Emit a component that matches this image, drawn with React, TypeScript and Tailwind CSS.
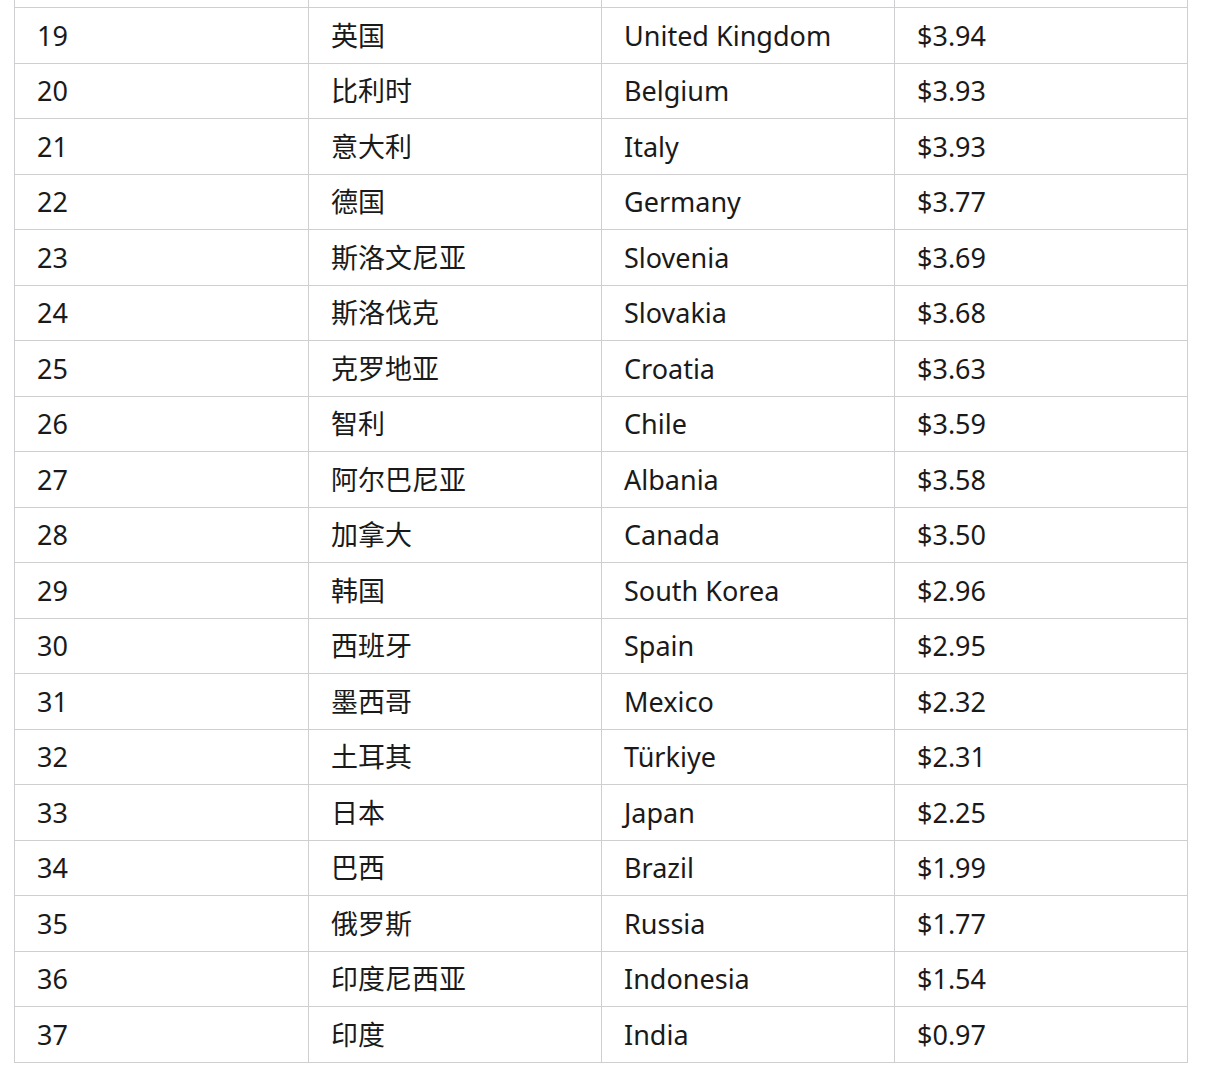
const ROWS: [number, string, string, string][] = [
  [19, '英国', 'United Kingdom', '$3.94'],
  [20, '比利时', 'Belgium', '$3.93'],
  [21, '意大利', 'Italy', '$3.93'],
  [22, '德国', 'Germany', '$3.77'],
  [23, '斯洛文尼亚', 'Slovenia', '$3.69'],
  [24, '斯洛伐克', 'Slovakia', '$3.68'],
  [25, '克罗地亚', 'Croatia', '$3.63'],
  [26, '智利', 'Chile', '$3.59'],
  [27, '阿尔巴尼亚', 'Albania', '$3.58'],
  [28, '加拿大', 'Canada', '$3.50'],
  [29, '韩国', 'South Korea', '$2.96'],
  [30, '西班牙', 'Spain', '$2.95'],
  [31, '墨西哥', 'Mexico', '$2.32'],
  [32, '土耳其', 'Türkiye', '$2.31'],
  [33, '日本', 'Japan', '$2.25'],
  [34, '巴西', 'Brazil', '$1.99'],
  [35, '俄罗斯', 'Russia', '$1.77'],
  [36, '印度尼西亚', 'Indonesia', '$1.54'],
  [37, '印度', 'India', '$0.97'],
];

export default function App() {
  return (
    <div
      className="min-h-[1080px] w-[1207px] bg-white"
      style={{ fontFamily: '"Noto Sans", "Noto Sans CJK SC", sans-serif' }}
    >
      <div className="ml-[14px] w-[1174px] border-x border-[#cfcfd2] text-[27px] text-[#1a1a1a]">
        {/* tail of the previous row, cut off by the screenshot */}
        <div className="grid h-[8px] grid-cols-4 border-b border-[#cfcfd2]">
          <div />
          <div className="border-l border-[#cfcfd2]" />
          <div className="border-l border-[#cfcfd2]" />
          <div className="border-l border-[#cfcfd2]" />
        </div>
        {ROWS.map(([rank, zh, en, price]) => (
          <div key={rank} className="grid h-[55.5px] grid-cols-4 border-b border-[#cfcfd2]">
            <div className="flex items-center pl-[22px] pt-[1px]">{rank}</div>
            <div className="flex items-center border-l border-[#cfcfd2] pl-[22px] pt-[1px]">{zh}</div>
            <div className="flex items-center border-l border-[#cfcfd2] pl-[22px] pt-[1px]">{en}</div>
            <div className="flex items-center border-l border-[#cfcfd2] pl-[22px] pt-[1px]">{price}</div>
          </div>
        ))}
      </div>
    </div>
  );
}
